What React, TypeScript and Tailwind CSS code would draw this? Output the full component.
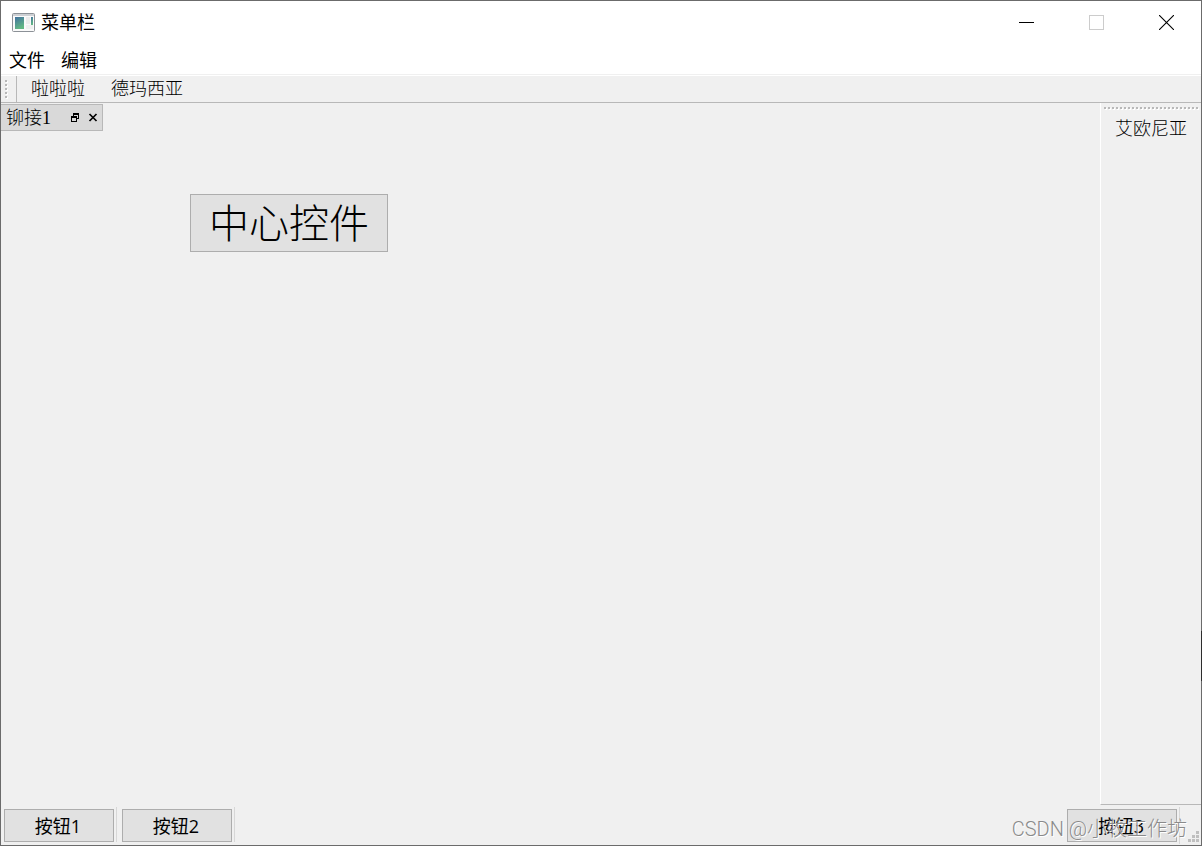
import type { ReactNode } from "react"

const menus = ["文件", "编辑"]
const topActions = ["啦啦啦", "德玛西亚"]
const sideActions = ["艾欧尼亚"]

const songti = "font-['SimSun','Liberation_Serif','Noto_Sans_CJK_SC',serif] font-light"

function AppIcon() {
  return (
    <svg width="23" height="19" viewBox="0 0 23 19" aria-hidden="true">
      <defs>
        <linearGradient id="pane" x1="0" y1="0" x2="0.4" y2="1">
          <stop offset="0" stopColor="#41709f" />
          <stop offset="1" stopColor="#62b884" />
        </linearGradient>
      </defs>
      <rect x="0.5" y="0.5" width="22" height="18" rx="1" fill="#fafafa" stroke="#8c9197" />
      <rect x="1" y="1" width="21" height="2" fill="#cdd0d4" />
      <rect x="3" y="4" width="9" height="12" fill="url(#pane)" />
      <rect x="14" y="4" width="4" height="7" fill="#ececec" />
      <rect x="14" y="12" width="7" height="4" fill="#f0f0f0" />
      <rect x="19" y="4" width="2" height="8" fill="url(#pane)" />
    </svg>
  )
}

function StatusItem({ children }: { children: ReactNode }) {
  return (
    <div className="flex border-r border-[#d7d7d7] pr-0.5 pt-0.5">
      <button type="button" className="h-[33px] w-[110px] border border-[#adadad] bg-[#e1e1e1] pr-0.5 text-lg leading-6">
        {children}
      </button>
    </div>
  )
}

export default function App() {
  return (
    <div className="relative flex min-h-screen flex-col border border-[#6b6b6b] bg-[#f0f0f0] font-['Open_Sans','Noto_Sans_CJK_SC',sans-serif] text-lg leading-6 text-black">
      {/* Title bar */}
      <header className="flex h-11 items-center bg-white pb-0.5 pl-[11px]">
        <AppIcon />
        <h1 className="ml-1.5 flex-1">菜单栏</h1>
        <button type="button" aria-label="最小化" className="flex h-full w-[70px] items-center justify-center">
          <svg width="15" height="15" viewBox="0 0 15 15" shapeRendering="crispEdges">
            <path d="M0 7.5H15" stroke="#000" />
          </svg>
        </button>
        <button type="button" aria-label="最大化" disabled className="flex h-full w-[70px] items-center justify-center">
          <svg width="15" height="15" viewBox="0 0 15 15" shapeRendering="crispEdges">
            <path d="M0.5 0.5H14.5V14.5H0.5Z" fill="none" stroke="#ccc" />
          </svg>
        </button>
        <button type="button" aria-label="关闭" className="flex h-full w-[70px] items-center justify-center">
          <svg width="15" height="15" viewBox="0 0 15 15">
            <path d="M0 0L15 15M15 0L0 15" stroke="#000" strokeWidth="1.1" />
          </svg>
        </button>
      </header>

      {/* Menu bar */}
      <nav className="flex h-[30px] items-center gap-4 border-b border-[#f0f0f0] bg-white px-2">
        {menus.map((menu) => (
          <button key={menu} type="button">
            {menu}
          </button>
        ))}
      </nav>

      {/* Top tool bar */}
      <div role="toolbar" className="flex h-7 border-b border-t border-b-[#b8b8b8] border-t-white">
        <svg width="16" height="26" viewBox="0 0 16 26" shapeRendering="crispEdges" aria-hidden="true">
          <path d="M6 5V23" stroke="#fff" strokeWidth="2" strokeDasharray="2 2" />
          <path d="M5 4V22" stroke="#b8b8b8" strokeWidth="2" strokeDasharray="2 2" />
          <path d="M15.5 0V26" stroke="#b8b8b8" />
        </svg>
        <div className={`flex items-center gap-[26px] pl-3.5 ${songti}`}>
          {topActions.map((action) => (
            <button key={action} type="button">
              {action}
            </button>
          ))}
        </div>
      </div>

      <div className="flex flex-1">
        {/* Dock widget */}
        <section className="pt-px">
          <div className="flex h-[27px] w-[102px] items-center border border-l-0 border-[#b8b8b8] bg-[#d9d9d9] pl-[5px] pr-1">
            <h2 className={`flex-1 ${songti}`}>铆接1</h2>
            <button type="button" aria-label="浮动" className="mr-2">
              <svg width="10" height="9" viewBox="0 0 10 9" shapeRendering="crispEdges">
                <path d="M3 0H9V2H3ZM1 3H7V5H1Z" />
                <path d="M3.5 0V3M8.5 0V6M7 5.5H9M1.5 3V9M1 8.5H7M6.5 3V9" fill="none" stroke="#000" />
              </svg>
            </button>
            <button type="button" aria-label="关闭停靠窗口">
              <svg width="10" height="9" viewBox="0 0 10 9">
                <path d="M1.5 1L8.5 8M8.5 1L1.5 8" stroke="#000" strokeWidth="1.7" />
              </svg>
            </button>
          </div>
        </section>

        <main className="flex-1 pl-[87px] pt-[91px]">
          <button type="button" className={`h-[58px] w-[198px] border border-[#adadad] bg-[#e1e1e1] pt-0.5 text-[40px] leading-[56px] ${songti}`}>
            中心控件
          </button>
        </main>

        {/* Right tool bar */}
        <aside className="w-[101px] border-b border-l border-b-[#b8b8b8] border-l-white">
          <svg className="block w-full" height="14" shapeRendering="crispEdges" aria-hidden="true">
            <line x1="4" y1="6" x2="98" y2="6" stroke="#fff" strokeWidth="2" strokeDasharray="2 2" />
            <line x1="3" y1="5" x2="98" y2="5" stroke="#b8b8b8" strokeWidth="2" strokeDasharray="2 2" />
          </svg>
          <div className={`flex flex-col items-center ${songti}`}>
            {sideActions.map((action) => (
              <button key={action} type="button">
                {action}
              </button>
            ))}
          </div>
        </aside>
      </div>

      {/* Status bar */}
      <footer className="flex h-10 items-start gap-[5px] pl-[3px] pt-0.5">
        <StatusItem>按钮1</StatusItem>
        <StatusItem>按钮2</StatusItem>
        <div className="ml-auto flex">
          <StatusItem>按钮3</StatusItem>
          <svg className="ml-2 mt-6" width="13" height="13" viewBox="0 0 13 13" fill="#bfbfbf" aria-hidden="true">
            <path d="M8 0h3v3h-3zM4 4h3v3h-3zM8 4h3v3h-3zM0 8h3v3h-3zM4 8h3v3h-3zM8 8h3v3h-3z" />
          </svg>
        </div>
      </footer>

      {/* Dark stretch on the window edge */}
      <div className="absolute -right-px bottom-41 h-[50px] w-px bg-[#2d2d2d]" />

      {/* Watermark */}
      <span className="pointer-events-none absolute bottom-1 right-3.5 font-['Roboto','Noto_Sans_CJK_SC',sans-serif] text-xl font-light leading-6 text-[#8a8a8a] [text-shadow:1px_1px_0_#fff]">
        CSDN @小牧工作坊
      </span>
    </div>
  )
}
